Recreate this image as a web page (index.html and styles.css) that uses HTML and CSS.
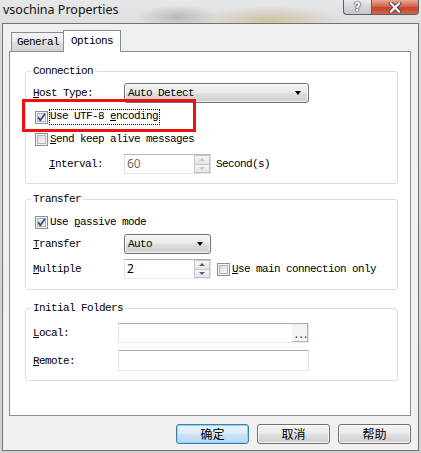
FILE: index.html
```html
<!DOCTYPE html>
<html>
<head>
<meta charset="utf-8">
<title>vsochina Properties</title>
<link rel="stylesheet" href="styles.css">
</head>
<body>
<div class="window">
  <div class="titlebar">
    <span class="title">vsochina Properties</span>
    <div class="caption-btns">
      <span class="cbtn help">?</span>
      <span class="cbtn close">
        <svg width="14" height="11" viewBox="0 0 14 11">
          <path d="M3 1.5 L11 9.5 M11 1.5 L3 9.5" stroke="#4a4a4a" stroke-width="4" stroke-linecap="square"/>
          <path d="M3 1.5 L11 9.5 M11 1.5 L3 9.5" stroke="#ffffff" stroke-width="2.2" stroke-linecap="square"/>
        </svg>
      </span>
    </div>
  </div>
  <div class="client">
    <div class="tabs">
      <div class="tab">General</div>
      <div class="tab active">Options</div>
    </div>
    <div class="panel">
      <fieldset class="group g-conn">
        <legend>Connection</legend>
        <div class="row r-host">
          <span class="lbl"><u>H</u>ost Type:</span>
          <div class="combo w-host"><span class="ctext-val">Auto Detect</span><i class="arrow"></i></div>
        </div>
        <div class="row r-utf">
          <span class="check on"><svg width="11" height="11" viewBox="0 0 11 11"><path d="M2.2 5.2 L4.3 8.2 L9 1.8" fill="none" stroke="#2b4a8c" stroke-width="1.7"/></svg></span>
          <span class="focus">Use UTF-8 <u>e</u>ncoding</span>
        </div>
        <div class="row r-keep">
          <span class="check"></span>
          <span class="ctext"><u>S</u>end keep alive messages</span>
        </div>
        <div class="row r-int">
          <span class="lbl indent"><u>I</u>nterval:</span>
          <div class="spin disabled">
            <span class="val">60</span>
            <div class="spinbtns">
              <span class="sb"><i class="up"></i></span>
              <span class="sb"><i class="down"></i></span>
            </div>
          </div>
          <span class="unit">Second(s)</span>
        </div>
      </fieldset>

      <fieldset class="group g-transfer">
        <legend>Transfer</legend>
        <div class="row r-passive">
          <span class="check on"><svg width="11" height="11" viewBox="0 0 11 11"><path d="M2.2 5.2 L4.3 8.2 L9 1.8" fill="none" stroke="#2b4a8c" stroke-width="1.7"/></svg></span>
          <span class="ctext">Use <u>p</u>assive mode</span>
        </div>
        <div class="row r-tmode">
          <span class="lbl"><u>T</u>ransfer</span>
          <div class="combo w-small"><span class="ctext-val">Auto</span><i class="arrow"></i></div>
        </div>
        <div class="row r-mult">
          <span class="lbl"><u>M</u>ultiple</span>
          <div class="spin">
            <span class="val">2</span>
            <div class="spinbtns">
              <span class="sb"><i class="up"></i></span>
              <span class="sb"><i class="down"></i></span>
            </div>
          </div>
          <span class="check mainconn"></span>
          <span class="ctext"><u>U</u>se main connection only</span>
        </div>
      </fieldset>

      <fieldset class="group g-folders">
        <legend>Initial Folders</legend>
        <div class="row r-local">
          <span class="lbl lbl-f"><u>L</u>ocal:</span>
          <div class="field"><span class="browse">...</span></div>
        </div>
        <div class="row r-remote">
          <span class="lbl lbl-f"><u>R</u>emote:</span>
          <div class="field"></div>
        </div>
      </fieldset>

      <div class="highlight"></div>
    </div>
    <div class="buttons">
      <span class="btn default">确定</span>
      <span class="btn">取消</span>
      <span class="btn">帮助</span>
    </div>
  </div>
</div>
</body>
</html>
```

FILE: styles.css
```css
html, body {
  margin: 0;
  padding: 0;
}
body {
  width: 421px;
  height: 453px;
  overflow: hidden;
  font-family: "Liberation Mono", "DejaVu Sans Mono", monospace;
  font-size: 11px;
  letter-spacing: -0.6px;
  color: #000;
}
u { text-decoration: underline; text-underline-offset: 1px; }

.window {
  width: 421px;
  height: 453px;
  box-sizing: border-box;
  padding: 0 2px 2px 2px;
  display: flex;
  flex-direction: column;
  background:
    radial-gradient(ellipse 70px 14px at 270px 20px, rgba(196, 168, 110, 0.55), rgba(196, 168, 110, 0) 100%),
    radial-gradient(ellipse 40px 12px at 178px 17px, rgba(110, 110, 110, 0.35), rgba(110, 110, 110, 0) 100%),
    linear-gradient(#e6e7e8, #d6d8da 40px, #cfd1d3);
}

/* title bar */
.titlebar {
  height: 23px;
  flex: none;
  display: flex;
  justify-content: space-between;
  align-items: flex-start;
}
.title {
  font-family: "Noto Sans", "Open Sans", sans-serif;
  font-size: 12.5px;
  letter-spacing: 0;
  line-height: 20px;
  padding-left: 1px;
  color: #111;
}
.caption-btns {
  display: flex;
}
.cbtn {
  height: 15px;
  box-sizing: border-box;
  border: 1px solid #5b5d60;
  border-top: none;
  display: flex;
  align-items: center;
  justify-content: center;
}
.help {
  width: 28px;
  border-right: none;
  border-radius: 0 0 0 4px;
  background: linear-gradient(#e9ecef, #d3d7db 50%, #c3c8ce);
  font-family: "DejaVu Sans", sans-serif;
  font-weight: bold;
  font-size: 12px;
  letter-spacing: 0;
  color: #fff;
  text-shadow: 0 0 1px #333, 0 0 1px #333, 0 0 2px #555;
  line-height: 14px;
}
.close {
  width: 48px;
  border-radius: 0 0 4px 0;
  background: linear-gradient(#e9a894, #d6654e 45%, #c4432d 55%, #d4664c);
}

/* client area */
.client {
  flex: none;
  height: 428px;
  box-sizing: border-box;
  border: 1px solid #6f7276;
  background: #f0f0f0;
  padding: 0 7px 6px 6px;
  display: flex;
  flex-direction: column;
}

.tabs {
  height: 27px;
  flex: none;
  display: flex;
  align-items: flex-end;
  padding-left: 2px;
}
.tab {
  box-sizing: border-box;
  width: 53px;
  height: 19px;
  border: 1px solid #898c95;
  border-bottom: none;
  background: linear-gradient(#f3f3f3, #ebebeb 45%, #dfdfdf 55%, #d2d2d2);
  padding-left: 5px;
  line-height: 18px;
}
.tab.active {
  position: relative;
  z-index: 1;
  width: 58px;
  height: 22px;
  margin-left: -1px;
  margin-bottom: -1px;
  background: #fff;
  padding-left: 7px;
  padding-top: 1px;
  line-height: 18px;
}

.panel {
  position: relative;
  flex: none;
  height: 365px;
  box-sizing: border-box;
  border: 1px solid #898c95;
  background: #fff;
  display: flex;
  flex-direction: column;
}

/* group boxes */
.group {
  margin: 0 12px 0 15px;
  padding: 5px 0 9px 5px;
  border: 1px solid #d5dfe5;
  border-radius: 3px;
  min-width: 0;
}
.group legend {
  padding: 0 2px;
  line-height: 14px;
}
.g-conn { margin-top: 12px; }
.g-transfer { margin-top: 8px; padding-bottom: 10px; }
.g-folders { margin-top: 11px; padding-top: 8px; }

.row {
  display: flex;
  align-items: center;
  margin-left: 2px;
}
.lbl {
  flex: none;
  width: 91px;
}
.lbl.indent {
  width: 75px;
  padding-left: 16px;
}
.lbl-f { width: 85px; }

.r-host { height: 20px; }
.r-utf { height: 22px; margin-top: 3px; }
.r-keep { height: 22px; }
.r-int { height: 20px; margin-top: 4px; }

.r-passive { height: 22px; }
.r-tmode { height: 20px; margin-top: 1px; }
.r-mult { height: 20px; margin-top: 5px; }

.r-local { height: 20px; }
.r-remote { height: 21px; margin-top: 7px; }

/* combo boxes */
.combo {
  box-sizing: border-box;
  height: 20px;
  border: 1px solid #707070;
  border-radius: 3px;
  background: linear-gradient(#f2f2f2, #ebebeb 45%, #dddddd 55%, #cfcfcf);
  box-shadow: inset 0 0 0 1px rgba(255, 255, 255, 0.7);
  display: flex;
  align-items: center;
  padding-left: 3px;
  padding-right: 7px;
}
.w-host { width: 185px; }
.w-small { width: 87px; }
.ctext-val { flex: 1; }
.arrow {
  width: 0;
  height: 0;
  border-left: 3.5px solid transparent;
  border-right: 3.5px solid transparent;
  border-top: 4px solid #000;
}

/* check boxes */
.check {
  flex: none;
  box-sizing: border-box;
  width: 13px;
  height: 13px;
  margin-left: 2px;
  margin-right: 2px;
  border: 1px solid #8e8f8f;
  background: linear-gradient(135deg, #cfd1d4, #eeeff0 60%, #f8f8f8);
  box-shadow: inset 0 0 0 1px #f4f4f4, inset 0 0 0 2px #b3b6ba;
  display: flex;
  align-items: center;
  justify-content: center;
}
.check svg { display: block; }
.focus {
  outline: 1px dotted #000;
  outline-offset: 0;
  line-height: 13px;
  padding: 0 1px 1px 0;
}
.ctext { line-height: 14px; }
.mainconn { margin-left: 6px; margin-right: 2px; }

/* spin boxes */
.spin {
  flex: none;
  box-sizing: border-box;
  width: 87px;
  height: 20px;
  border: 1px solid;
  border-color: #abadb3 #dbdfe6 #e3e9ef #e2e3ea;
  background: #fff;
  display: flex;
  align-items: stretch;
}
.spin .val {
  flex: 1;
  padding-left: 2px;
  line-height: 18px;
  font-family: "Noto Sans", sans-serif;
  letter-spacing: 0;
  font-size: 12px;
}
.spin.disabled .val { color: #6d6d6d; }
.spin.disabled { border-color: #b5b8bc #d9dce0 #dfe3e8 #d9dce0; }
.spinbtns {
  width: 16px;
  display: flex;
  flex-direction: column;
}
.sb {
  flex: 1;
  box-sizing: border-box;
  border: 1px solid #c3c6ca;
  background: linear-gradient(#f6f6f6, #e4e4e4);
  display: flex;
  align-items: center;
  justify-content: center;
}
.sb + .sb { border-top: none; }
.sb .up {
  width: 0; height: 0;
  border-left: 3px solid transparent;
  border-right: 3px solid transparent;
  border-bottom: 3px solid #4d6185;
}
.sb .down {
  width: 0; height: 0;
  border-left: 3px solid transparent;
  border-right: 3px solid transparent;
  border-top: 3px solid #4d6185;
}
.disabled .sb .up { border-bottom-color: #c3c6ca; }
.disabled .sb .down { border-top-color: #c3c6ca; }
.unit { margin-left: 5px; }

/* folder fields */
.field {
  flex: none;
  box-sizing: border-box;
  width: 191px;
  height: 100%;
  border: 1px solid;
  border-color: #abadb3 #dbdfe6 #e3e9ef #e2e3ea;
  background: #fff;
  display: flex;
  justify-content: flex-end;
}
.browse {
  width: 16px;
  box-sizing: border-box;
  border-right: 1px solid #b7b7b7;
  border-bottom: 1px solid #b7b7b7;
  background: #f4f4f4;
  font-size: 11px;
  letter-spacing: -2px;
  line-height: 22px;
  text-align: center;
  color: #333;
  padding-left: 1px;
}

/* red annotation */
.highlight {
  position: absolute;
  left: 12px;
  top: 47px;
  width: 174px;
  height: 33px;
  box-sizing: border-box;
  border: 3px solid #ee1111;
}

/* bottom buttons */
.buttons {
  margin-top: 8px;
  height: 20px;
  display: flex;
  justify-content: flex-end;
  gap: 8px;
}
.btn {
  box-sizing: border-box;
  width: 73px;
  height: 20px;
  border: 1px solid #707070;
  border-radius: 3px;
  background: linear-gradient(#f2f2f2, #ebebeb 45%, #dddddd 55%, #cfcfcf);
  box-shadow: inset 0 0 0 1px rgba(255, 255, 255, 0.75);
  font-family: "Noto Sans CJK SC", sans-serif;
  font-size: 12px;
  letter-spacing: 0;
  line-height: 18px;
  text-align: center;
}
.btn.default {
  border-color: #3c7fb1;
  background: linear-gradient(#eaf5fc, #dcedf8 45%, #c8e3f5 55%, #b6d9f0);
  box-shadow: inset 0 0 0 1px #8ed2f4;
}
```
